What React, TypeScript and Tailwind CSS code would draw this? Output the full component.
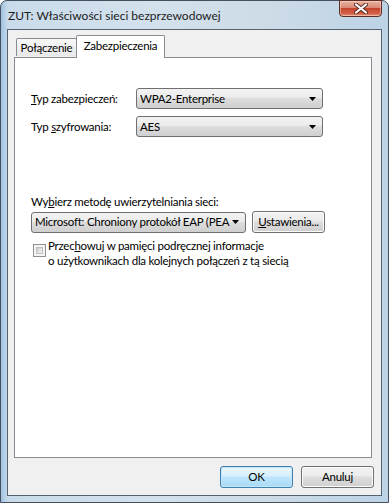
import React from 'react';

const FONT = { fontFamily: 'Lato, "Noto Sans", sans-serif' };

const Combo = ({ text, width }: { text: string; width: string }) => (
  <div
    className={`${width} h-[21px] flex items-center border border-[#707070] rounded-[3px] bg-[linear-gradient(#f3f3f3,#ebebeb_45%,#dddddd_50%,#cfcfcf)] pl-[3px] pr-[6px]`}
  >
    <span className="flex-1 overflow-hidden whitespace-nowrap text-black leading-[16px]">{text}</span>
    <svg width="7" height="4" viewBox="0 0 7 4" className="shrink-0 ml-[2px]">
      <path d="M0 0h7L3.5 4z" fill="#000" />
    </svg>
  </div>
);

const Button = ({ children, primary, width }: { children: React.ReactNode; primary?: boolean; width: string }) => (
  <button
    className={`${width} h-[22px] rounded-[3px] border text-black leading-none ${
      primary
        ? 'border-[#3c7fb1] bg-[linear-gradient(#eaf6fd,#d9f0fc_45%,#bee6fd_50%,#a7d9f5)] shadow-[inset_0_0_0_1px_#c6e6f8]'
        : 'border-[#707070] bg-[linear-gradient(#f2f2f2,#ebebeb_45%,#dddddd_50%,#cfcfcf)] shadow-[inset_0_0_0_1px_#fcfcfc]'
    }`}
  >
    {children}
  </button>
);

export default function App() {
  return (
    <div className="w-[389px] h-[503px] overflow-hidden bg-white" style={FONT}>
      <div className="w-full h-full flex flex-col border border-[#45505c] rounded-t-[7px] bg-[linear-gradient(90deg,#9fc3e3_0px,#c9dbea_7px,#d3e1ed_40%,#cddbe7_70%,#bcd3e6_100%)]">
        {/* Title bar */}
        <div className="h-[28px] flex items-start justify-between shrink-0">
          <span className="mt-[6px] ml-[7px] text-[12px] text-[#1c1c1c] whitespace-nowrap">
            ZUT: Właściwości sieci bezprzewodowej
          </span>
          <div className="mr-[6px] w-[43px] h-[17px] -mt-px rounded-b-[4px] border border-[#5e2e26] bg-[linear-gradient(#eab3a3,#d98a76_45%,#c4452c_50%,#d4624a_85%,#e9a07f)] flex items-center justify-center shadow-[inset_0_0_0_1px_rgba(255,220,210,0.5)]">
            <svg width="14" height="11" viewBox="0 0 14 11">
              <path d="M2 1.5l10 8M12 1.5l-10 8" stroke="#5a2a22" strokeWidth="4" strokeLinecap="round" />
              <path d="M2 1.5l10 8M12 1.5l-10 8" stroke="#ffffff" strokeWidth="2.2" strokeLinecap="round" />
            </svg>
          </div>
        </div>

        {/* Client area */}
        <div className="flex-1 mx-[6px] mb-[6px] border border-[#55626f] bg-[#f0f0f0] flex flex-col pt-[5px] pl-[6px] pr-[7px] text-[11.5px] tracking-[-0.25px]">
          {/* Tabs */}
          <div className="h-[22px] flex items-end pl-[2px] relative z-10">
            <div className="w-[61px] h-[18px] mb-px border border-b-0 border-[#898c95] rounded-t-[2px] bg-[linear-gradient(#f7f7f7,#e8e8e8)] text-black flex items-center justify-center leading-none pt-px">
              Połączenie
            </div>
            <div className="w-[89px] h-[23px] -mb-px -ml-px border border-b-0 border-[#898c95] rounded-t-[2px] bg-white text-black flex items-start justify-center pt-[4px] leading-none">
              Zabezpieczenia
            </div>
          </div>

          {/* Panel */}
          <div className="h-[401px] w-[358px] border border-[#898c95] bg-white pl-[16px] pt-[30px] text-black">
            <div className="flex items-center h-[21px]">
              <span className="w-[105px] shrink-0">
                <u>T</u>yp zabezpieczeń:
              </span>
              <Combo text="WPA2-Enterprise" width="w-[187px]" />
            </div>
            <div className="flex items-center h-[21px] mt-[7px]">
              <span className="w-[105px] shrink-0">
                Typ <u>s</u>zyfrowania:
              </span>
              <Combo text="AES" width="w-[187px]" />
            </div>

            <div className="mt-[57px] h-[16px] leading-[16px]">
              Wy<u>b</u>ierz metodę uwierzytelniania sieci:
            </div>
            <div className="flex items-center mt-px gap-[6px]">
              <Combo text="Microsoft: Chroniony protokół EAP (PEA" width="w-[215px]" />
              <Button width="w-[73px]">
                <u>U</u>stawienia...
              </Button>
            </div>

            <div className="flex items-start mt-[5px] pl-[2px]">
              <div className="w-[13px] h-[13px] mt-[6px] shrink-0 border border-[#8f8f8f] bg-[#f4f4f4] p-[2px]">
                <div className="w-full h-full bg-[linear-gradient(135deg,#cbcbcb,#f6f6f6)] border border-[#c0c0c0]" />
              </div>
              <div className="ml-[2px] leading-[15px]">
                <div>
                  Przec<u>h</u>owuj w pamięci podręcznej informacje
                </div>
                <div>o użytkownikach dla kolejnych połączeń z tą siecią</div>
              </div>
            </div>
          </div>

          {/* Buttons */}
          <div className="flex justify-end gap-[8px] mt-[8px]">
            <Button primary width="w-[73px]">
              OK
            </Button>
            <Button width="w-[73px]">Anuluj</Button>
          </div>
        </div>
      </div>
    </div>
  );
}
